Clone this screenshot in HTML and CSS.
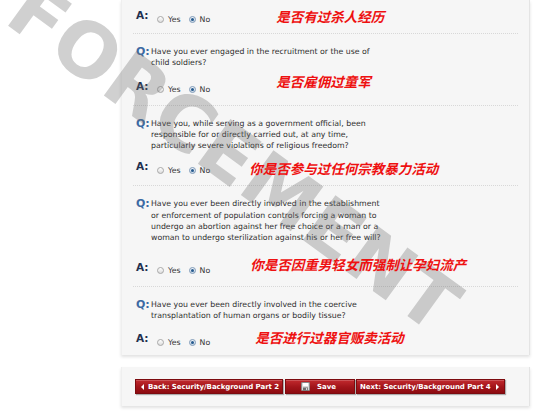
FILE: index.html
```html
<!DOCTYPE html>
<html lang="en">
<head>
<meta charset="utf-8">
<title>Security and Background Part 3</title>
<link rel="stylesheet" href="styles.css">
</head>
<body>
<div class="watermark">FORCEMENT</div>
<div class="page">
  <div class="panel">
    <div class="item item-first">
      <div class="answer">
        <span class="a-label">A:</span>
        <span class="choices">
          <span class="radio"></span><span class="opt">Yes</span>
          <span class="radio checked"></span><span class="opt">No</span>
        </span>
        <span class="note note-1">是否有过杀人经历</span>
      </div>
    </div>

    <div class="item">
      <div class="question">
        <span class="q-label">Q:</span>
        <p class="q-text">Have you ever engaged in the recruitment or the use of<br>child soldiers?</p>
      </div>
      <div class="answer gap-11">
        <span class="a-label">A:</span>
        <span class="choices">
          <span class="radio"></span><span class="opt">Yes</span>
          <span class="radio checked"></span><span class="opt">No</span>
        </span>
        <span class="note note-2">是否雇佣过童军</span>
      </div>
    </div>

    <div class="item">
      <div class="question">
        <span class="q-label">Q:</span>
        <p class="q-text">Have you, while serving as a government official, been<br>responsible for or directly carried out, at any time,<br>particularly severe violations of religious freedom?</p>
      </div>
      <div class="answer gap-9">
        <span class="a-label">A:</span>
        <span class="choices">
          <span class="radio"></span><span class="opt">Yes</span>
          <span class="radio checked"></span><span class="opt">No</span>
        </span>
        <span class="note note-3">你是否参与过任何宗教暴力活动</span>
      </div>
    </div>

    <div class="item">
      <div class="question">
        <span class="q-label">Q:</span>
        <p class="q-text">Have you ever been directly involved in the establishment<br>or enforcement of population controls forcing a woman to<br>undergo an abortion against her free choice or a man or a<br>woman to undergo sterilization against his or her free will?</p>
      </div>
      <div class="answer gap-17">
        <span class="a-label">A:</span>
        <span class="choices">
          <span class="radio"></span><span class="opt">Yes</span>
          <span class="radio checked"></span><span class="opt">No</span>
        </span>
        <span class="note note-4">你是否因重男轻女而强制让孕妇流产</span>
      </div>
    </div>

    <div class="item item-last">
      <div class="question">
        <span class="q-label">Q:</span>
        <p class="q-text">Have you ever been directly involved in the coercive<br>transplantation of human organs or bodily tissue?</p>
      </div>
      <div class="answer gap-11">
        <span class="a-label">A:</span>
        <span class="choices">
          <span class="radio"></span><span class="opt">Yes</span>
          <span class="radio checked"></span><span class="opt">No</span>
        </span>
        <span class="note note-5">是否进行过器官贩卖活动</span>
      </div>
    </div>
  </div>

  <div class="bar">
    <button class="btn btn-back"><span class="arrow arrow-left"></span>Back: Security/Background Part 2</button>
    <button class="btn btn-save"><svg class="disk" viewBox="0 0 9 9" width="9" height="9"><rect x="0.5" y="0.5" width="8" height="8" rx="0.6" fill="#d9d9d9" stroke="#8a8a8a" stroke-width="1"/><rect x="2" y="1" width="5" height="3" fill="#ffffff"/><rect x="2" y="5.5" width="5" height="3" fill="#6f6f6f"/><rect x="5" y="6" width="1.2" height="2" fill="#d9d9d9"/></svg>Save</button>
    <button class="btn btn-next">Next: Security/Background Part 4<span class="arrow arrow-right"></span></button>
  </div>
</div>
</body>
</html>
```
FILE: styles.css
```css
* { box-sizing: border-box; }

html, body {
  margin: 0;
  padding: 0;
  background: #ffffff;
}

body {
  width: 545px;
  height: 415px;
  overflow: hidden;
  position: relative;
  font-family: "DejaVu Sans", Verdana, sans-serif;
  color: #333333;
}

.watermark {
  position: absolute;
  left: 40px;
  top: -30px;
  transform: rotate(36deg);
  transform-origin: 0 0;
  font-family: "DejaVu Sans", sans-serif;
  font-weight: 700;
  font-size: 76px;
  line-height: 1;
  letter-spacing: 1px;
  white-space: nowrap;
  color: rgba(110, 110, 110, 0.32);
  z-index: 5;
  pointer-events: none;
}

.page {
  margin-left: 121px;
  width: 409px;
}

.panel {
  background: #f6f6f6;
  border-right: 1px solid #e4e4e4;
  border-left: 1px solid #efefef;
  padding: 0 11px 0 11px;
  box-shadow: 0 2px 3px rgba(0, 0, 0, 0.12);
}

.item {
  border-top: 1px dotted #d8d8d8;
  padding: 12px 0 9px 3px;
}

.item-first {
  border-top: none;
  padding-top: 9px;
  padding-bottom: 8px;
}

.item-last {
  padding-bottom: 7px;
}

.question {
  display: flex;
  align-items: flex-start;
}

.q-label {
  width: 15px;
  flex: none;
  color: #3d6aa3;
  font-weight: 700;
  font-size: 11px;
  line-height: 11.3px;
}

.q-text {
  margin: 0;
  font-size: 7.8px;
  line-height: 11.3px;
  color: #2e2e2e;
}

.answer {
  display: flex;
  align-items: flex-start;
  height: 16px;
}

.gap-9 { margin-top: 9px; }
.gap-11 { margin-top: 11px; }
.gap-17 { margin-top: 17px; }

.a-label {
  width: 21px;
  flex: none;
  color: #22304f;
  font-weight: 700;
  font-size: 10.5px;
  line-height: 12px;
}

.choices {
  display: flex;
  align-items: center;
  height: 12px;
  margin-top: 4px;
  font-size: 7.8px;
  color: #333333;
}

.radio {
  width: 7px;
  height: 7px;
  border-radius: 50%;
  border: 1px solid #a8a8a8;
  background: linear-gradient(#ffffff, #dcdcdc);
  margin-right: 4px;
  flex: none;
  display: flex;
  align-items: center;
  justify-content: center;
}

.radio.checked {
  border-color: #7f9ab8;
  background: linear-gradient(#eef3f8, #c9d6e4);
}

.radio.checked::after {
  content: "";
  width: 3px;
  height: 3px;
  border-radius: 50%;
  background: #255a8e;
}

.opt {
  margin-right: 8px;
}

.note {
  position: relative;
  z-index: 6;
  font-family: "Noto Sans CJK SC", sans-serif;
  font-weight: 700;
  font-style: italic;
  font-size: 13.5px;
  line-height: 16px;
  color: #ee1111;
  white-space: nowrap;
}

.note-1 { margin-left: 58px; margin-top: -1px; }
.note-2 { margin-left: 58px; margin-top: -7px; }
.note-3 { margin-left: 31px; margin-top: 0; }
.note-4 { margin-left: 32px; margin-top: -5px; }
.note-5 { margin-left: 37px; margin-top: -3px; }

.bar {
  margin-top: 12px;
  background: #f6f6f6;
  border-right: 1px solid #e4e4e4;
  border-left: 1px solid #efefef;
  box-shadow: 0 2px 3px rgba(0, 0, 0, 0.12);
  padding: 12px 0 12px 13px;
  display: flex;
  align-items: center;
}

.btn {
  height: 15px;
  margin: 0;
  padding: 0;
  display: flex;
  align-items: center;
  color: #ffffff;
  font-family: "DejaVu Sans", Verdana, sans-serif;
  font-weight: 700;
  font-size: 7px;
  letter-spacing: -0.05px;
  white-space: nowrap;
  overflow: visible;
  background: linear-gradient(#c22a2e, #a1141a 55%, #8d0c11);
  border: 1px solid #7c0b0f;
  box-shadow: 1px 1px 1px rgba(0, 0, 0, 0.3), inset 0 1px 0 rgba(255, 255, 255, 0.2);
  border-radius: 0;
}

.btn-back {
  width: 148px;
  padding-left: 5px;
}

.btn-save {
  width: 70px;
  margin-left: 2px;
  padding-left: 15px;
}

.btn-next {
  width: 149px;
  margin-left: 1px;
  padding-left: 3px;
}

.disk {
  margin-right: 7px;
  flex: none;
}

.arrow {
  width: 0;
  height: 0;
  border-top: 3px solid transparent;
  border-bottom: 3px solid transparent;
  flex: none;
}

.arrow-left {
  border-right: 3px solid #ffffff;
  margin-right: 4px;
}

.arrow-right {
  border-left: 3px solid #ffffff;
  margin-left: 5px;
}
```
